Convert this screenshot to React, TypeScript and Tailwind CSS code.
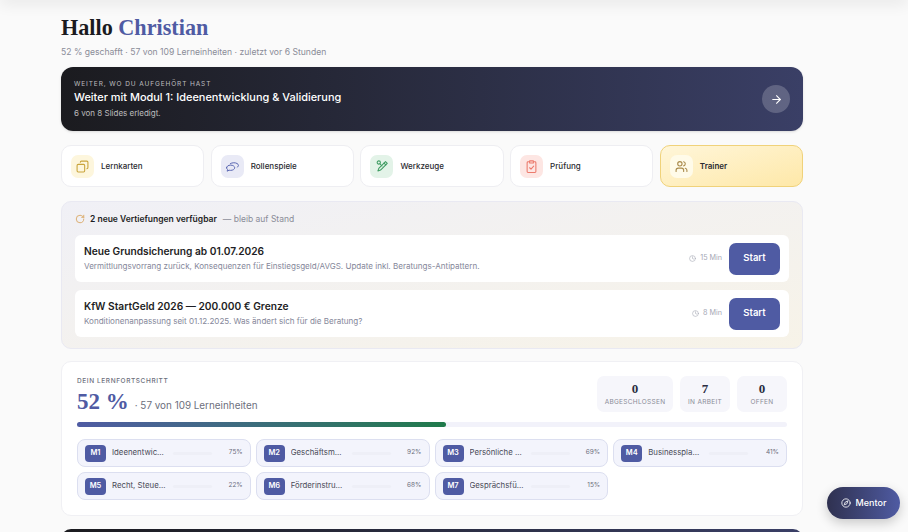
import { ArrowRight, Clock, Compass, Copy, RotateCw, Users } from 'lucide-react'

const sans = { fontFamily: 'Inter' }
const serif = { fontFamily: 'Liberation Serif' }

const modules = [
  { id: 'M1', name: 'Ideenentwic...', pct: 75 },
  { id: 'M2', name: 'Geschäftsm...', pct: 92 },
  { id: 'M3', name: 'Persönliche ...', pct: 69 },
  { id: 'M4', name: 'Businesspla...', pct: 41 },
  { id: 'M5', name: 'Recht, Steue...', pct: 22 },
  { id: 'M6', name: 'Förderinstru...', pct: 68 },
  { id: 'M7', name: 'Gesprächsfü...', pct: 15 }
]

function ChatIcon() {
  return (
    <svg viewBox="0 0 24 24" className="size-[15px]" fill="none" stroke="currentColor" strokeWidth="1.6" strokeLinecap="round" strokeLinejoin="round">
      <path d="M2.500 14c0-2.300 2.800-4.200 6.500-4.200s6.500 1.900 6.500 4.200-2.800 4.200-6.500 4.200c-.9 0-1.700-.1-2.500-.3L3.500 19.500l.6-2.700C3.100 16 2.500 15 2.500 14Z" />
      <path d="M8.500 7.500C9.800 6.600 11.800 6 14 6c4.100 0 7.500 1.800 7.500 4.200 0 1.200-.8 2.200-2 3" />
    </svg>
  )
}

function ToolIcon() {
  return (
    <svg viewBox="0 0 24 24" className="size-[14px]" fill="none" stroke="currentColor" strokeWidth="1.800" strokeLinecap="round" strokeLinejoin="round">
      <circle cx="6.500" cy="6" r="2.800" />
      <path d="M8.500 8.500 12 12" />
      <path d="M18 4.500 21 7.500 9.500 19 5 20.500 6.500 16 18 4.500Z" />
      <path d="m15.500 7 3 3" />
    </svg>
  )
}

function ExamIcon() {
  return (
    <svg viewBox="0 0 24 24" className="size-[15px]" fill="none" stroke="currentColor" strokeWidth="1.700" strokeLinecap="round" strokeLinejoin="round">
      <path d="M8.500 4.500H6.500a1.500 1.500 0 0 0-1.500 1.500v14a1.500 1.500 0 0 0 1.500 1.500h11a1.500 1.500 0 0 0 1.500-1.500V6a1.500 1.500 0 0 0-1.500-1.500h-2" />
      <path d="M9 3h6v3.500H9z" />
      <path d="m9 14 2.200 2.200L15.500 11.500" />
    </svg>
  )
}

const tiles = [
  { label: 'Lernkarten', box: 'bg-[#fdf6dd] text-[#c9a43c]', icon: <Copy className="size-[13px] -scale-x-100" /> },
  { label: 'Rollenspiele', box: 'bg-[#e9eaf6] text-[#5b68b3]', icon: <ChatIcon /> },
  { label: 'Werkzeuge', box: 'bg-[#e3f3e8] text-[#3f9c62]', icon: <ToolIcon /> },
  { label: 'Prüfung', box: 'bg-[#fde6e3] text-[#ec7a6c]', icon: <ExamIcon /> }
]

const updates = [
  {
    title: 'Neue Grundsicherung ab 01.07.2026',
    text: 'Vermittlungsvorrang zurück, Konsequenzen für Einstiegsgeld/AVGS. Update inkl. Beratungs-Antipattern.',
    time: '15 Min'
  },
  {
    title: 'KfW StartGeld 2026 — 200.000 € Grenze',
    text: 'Konditionenanpassung seit 01.12.2025. Was ändert sich für die Beratung?',
    time: '8 Min'
  }
]

const stats = [
  { value: '0', label: 'ABGESCHLOSSEN', width: 'w-[76px]' },
  { value: '7', label: 'IN ARBEIT', width: 'w-[50px]' },
  { value: '0', label: 'OFFEN', width: 'w-[50px]' }
]

export default function App() {
  return (
    <div className="relative h-[532px] w-[908px] overflow-hidden bg-[#fafafa]" style={sans}>
      {/* shadow of the sticky header above the fold */}
      <div className="absolute -top-2 left-0 right-0 h-2 bg-white shadow-[0_2px_16px_rgba(0,0,0,0.12)]" />

      <div className="ml-[61px] w-[742px] pt-[14px]">
        <h1 className="text-[22.200px] leading-[28px] font-bold text-[#1b1b1f]" style={serif}>
          Hallo <span className="text-[#4f5ba3]">Christian</span>
        </h1>
        <p className="mt-[4px] text-[8.600px] leading-[12px] text-[#8a8c98]">52 % geschafft · 57 von 109 Lerneinheiten · zuletzt vor 6 Stunden</p>

        {/* Continue banner */}
        <div className="mt-[9px] flex h-[64px] items-center justify-between rounded-[12px] bg-linear-to-r from-[#1b1b1f] to-[#3a3f66] px-[13px] shadow-sm">
          <div className="pb-[2px]">
            <p className="text-[6.500px] leading-[10px] tracking-[0.9px] text-white/70">WEITER, WO DU AUFGEHÖRT HAST</p>
            <p className="text-[10.950px] leading-[16px] font-medium text-white">Weiter mit Modul 1: Ideenentwicklung &amp; Validierung</p>
            <p className="mt-[3px] text-[8px] leading-[10px] text-white/70">6 von 8 Slides erledigt.</p>
          </div>
          <div className="flex size-[28px] items-center justify-center rounded-full bg-white/20 text-white">
            <ArrowRight className="size-[13px]" />
          </div>
        </div>

        {/* Tiles */}
        <div className="mt-[14px] grid grid-cols-5 gap-[6.500px]">
          {tiles.map(tile => (
            <div key={tile.label} className="flex h-[42px] items-center gap-[7px] rounded-[10px] border border-[#eeeef2] bg-white pl-[9px]">
              <div className={`flex size-[23px] items-center justify-center rounded-[7px] ${tile.box}`}>{tile.icon}</div>
              <span className="text-[8px] font-medium text-[#2a2a30]">{tile.label}</span>
            </div>
          ))}
          <div className="flex h-[42px] items-center gap-[7px] rounded-[10px] border border-[#f0d27a] bg-linear-to-br from-[#fff6d9] to-[#fee8a8] pl-[9px]">
            <div className="flex size-[23px] items-center justify-center rounded-[7px] bg-[#fffbe9] text-[#a98a4a]">
              <Users className="size-[13px]" />
            </div>
            <span className="text-[8px] font-semibold text-[#2a2a30]">Trainer</span>
          </div>
        </div>

        {/* New deep dives */}
        <div className="mt-[14px] h-[148px] rounded-[10px] border border-[#e9e9f2] bg-linear-to-br from-[#f0f0f6] to-[#f7f3e8] px-[13px] pt-[10px]">
          <div className="flex h-[14px] items-center gap-[5px] text-[8.500px]">
            <RotateCw className="size-[10px] text-[#d9a259]" />
            <span className="font-semibold text-[#1e1e24]">2 neue Vertiefungen verfügbar</span>
            <span className="ml-[1px] text-[#8a8c98]">— bleib auf Stand</span>
          </div>
          <div className="mt-[9px] flex flex-col gap-[8px]">
            {updates.map(item => (
              <div key={item.title} className="flex h-[47px] items-center justify-between rounded-[6px] bg-white px-[9px]">
                <div className="pb-[2px]">
                  <p className="text-[10.200px] leading-[14px] font-semibold text-[#1e1e24]">{item.title}</p>
                  <p className="mt-[3px] text-[8.050px] leading-[10px] text-[#85879a]">{item.text}</p>
                </div>
                <div className="flex items-center gap-[7px]">
                  <span className="flex items-center gap-[4px] text-[7.200px] text-[#a6a8b5]">
                    <Clock className="size-[7px]" />
                    {item.time}
                  </span>
                  <button className="h-[32px] w-[51px] rounded-[7px] bg-[#4f5ba3] text-[9.500px] font-semibold text-white">Start</button>
                </div>
              </div>
            ))}
          </div>
        </div>

        {/* Progress */}
        <div className="mt-[12px] h-[155px] rounded-[10px] border border-[#f0f0f4] bg-white px-[15px] pt-[14px]">
          <div className="flex items-start justify-between">
            <div>
              <p className="mt-[1px] text-[6.500px] leading-[9px] font-medium tracking-[0.6px] text-[#6d6f7d]">DEIN LERNFORTSCHRITT</p>
              <p className="mt-[2px] flex items-baseline gap-[6px]">
                <span className="text-[23px] leading-[28px] font-bold text-[#4f5ba3]" style={serif}>52 %</span>
                <span className="text-[9.900px] text-[#6d6f7d]">· 57 von 109 Lerneinheiten</span>
              </p>
            </div>
            <div className="flex gap-[7px]">
              {stats.map(stat => (
                <div key={stat.label} className={`flex h-[36px] flex-col items-center justify-center rounded-[7px] bg-[#f6f6fb] ${stat.width}`}>
                  <span className="text-[13px] leading-[14px] font-bold text-[#2b2d42]" style={serif}>{stat.value}</span>
                  <span className="mt-[2px] text-[6.500px] leading-[8px] tracking-[0.3px] text-[#8a8c98]">{stat.label}</span>
                </div>
              ))}
            </div>
          </div>

          <div className="mt-[6px] h-[5px] rounded-full bg-[#f2f2fa]">
            <div className="h-full rounded-full bg-linear-to-r from-[#4f5ba3] to-[#1f7a4a]" style={{ width: '52%' }} />
          </div>

          <div className="mt-[12px] grid grid-cols-4 gap-[5px]">
            {modules.map(mod => (
              <div key={mod.id} className="flex h-[28px] items-center rounded-[8px] border border-[#dcdff0] bg-[#f3f4fc] px-[7px]">
                <div className="flex h-[17px] w-[21px] shrink-0 items-center justify-center rounded-[4px] bg-[#4f5ba3] text-[7.500px] font-semibold text-white">{mod.id}</div>
                <span className="ml-[6px] w-[61px] shrink-0 overflow-hidden text-[7.800px] whitespace-nowrap text-[#4a4b58]">{mod.name}</span>
                <div className="h-[3px] w-[39px] shrink-0 rounded-full bg-[#eeeff7]" />
                <span className="ml-auto text-[6.500px] text-[#6d6f7d]">{mod.pct}%</span>
              </div>
            ))}
          </div>
        </div>

        {/* next section, cut off by the fold */}
        <div className="mt-[13px] h-[40px] rounded-t-[10px] bg-linear-to-r from-[#1b1b1f] to-[#3a3f66]" />
      </div>

      {/* Mentor button */}
      <button className="absolute left-[827px] top-[487px] flex h-[32px] w-[73px] items-center justify-center gap-[5px] rounded-full bg-linear-to-r from-[#2f3150] to-[#4f5ba3] text-[9px] font-medium text-white shadow-[0_4px_12px_rgba(0,0,0,0.2)]">
        <Compass className="size-[10px]" />
        Mentor
      </button>
    </div>
  )
}
